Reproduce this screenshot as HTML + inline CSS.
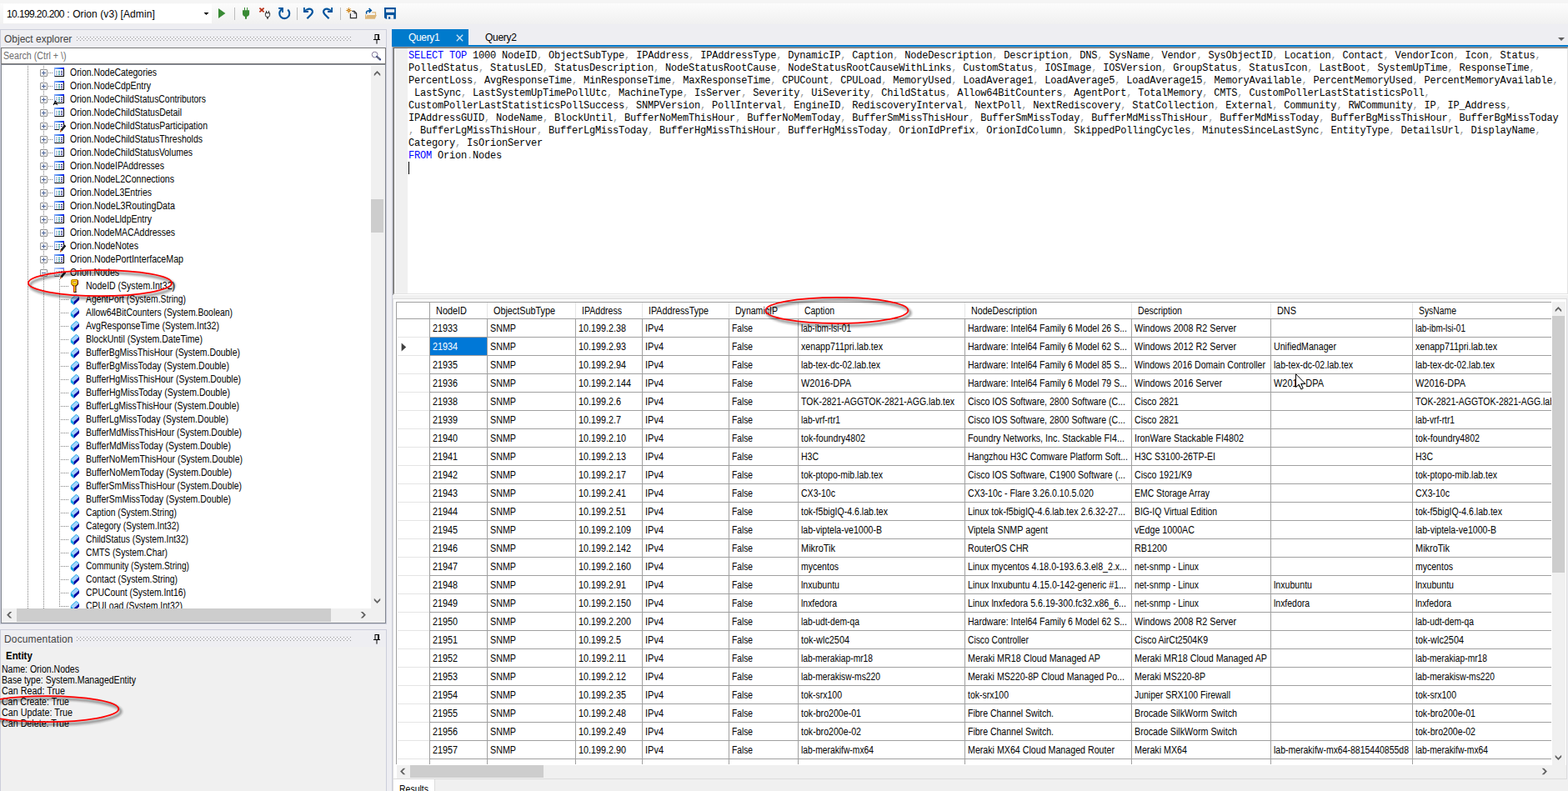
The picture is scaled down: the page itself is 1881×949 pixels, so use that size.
<!DOCTYPE html>
<html lang="en"><head><meta charset="utf-8"><title>SWQL Studio</title>
<style>
html,body{margin:0;padding:0;background:#eeeef2;}
body{width:1881px;height:949px;overflow:hidden;position:relative;font-family:"Liberation Sans",sans-serif;}
#app{position:absolute;left:0;top:0;width:1881px;height:949px;overflow:hidden;background:#eeeef2;}
#app div,#app span,#app svg{position:absolute;box-sizing:border-box;}
.t{white-space:pre;color:#000;font-size:12.3px;line-height:14px;height:14px;transform-origin:0 50%;}
.s{white-space:pre;font-size:12px;line-height:16px;height:16px;}
.code{font-family:"Liberation Mono",monospace;font-size:12px;letter-spacing:-0.2px;line-height:15px;height:15px;white-space:pre;color:#000;left:490px;}
.code b{font-weight:normal;color:#0000ff;}
.code i{font-style:normal;color:#999;}
.vl{width:1px;background:#a0a0a0;}
.hl{height:1px;background:#a0a0a0;}
.dv{width:1px;background-image:linear-gradient(#808080 50%,rgba(0,0,0,0) 50%);background-size:1px 2px;}
.dh{height:1px;background-image:linear-gradient(90deg,#808080 50%,rgba(0,0,0,0) 50%);background-size:2px 1px;}
.pm{width:9px;height:9px;border:1px solid #919191;border-radius:1px;background:linear-gradient(#fff 50%,#e8e8e8);}
.pm:before{content:"";position:absolute;left:1px;top:3px;width:5px;height:1px;background:#4b6397;}
.pm.plus:after{content:"";position:absolute;left:3px;top:1px;width:1px;height:5px;background:#4b6397;}

</style></head><body>
<svg width="0" height="0" style="position:absolute">
<defs>
<linearGradient id="gTbl" x1="0" x2="1" y1="0" y2="0"><stop offset="0" stop-color="#8fb0f8"/><stop offset="0.5" stop-color="#3a7cf0"/><stop offset="1" stop-color="#0010f0"/></linearGradient>
<linearGradient id="gProp" x1="0" x2="1" y1="0" y2="1"><stop offset="0" stop-color="#bfe0ff"/><stop offset="1" stop-color="#5aa0e8"/></linearGradient>
<symbol id="iTbl" viewBox="0 0 16 16">
 <rect x="2" y="4" width="11" height="8" fill="#fff"/>
 <rect x="2" y="2" width="12" height="2" fill="url(#gTbl)"/>
 <rect x="2" y="4" width="1" height="8" fill="#8aa8e0"/>
 <rect x="13" y="4" width="1" height="9" fill="#000"/>
 <rect x="3" y="12" width="11" height="1" fill="#000"/>
 <rect x="2" y="12" width="1" height="1" fill="#506090"/>
 <g fill="#8c9cc0"><rect x="4" y="6" width="2" height="1"/><rect x="4" y="8" width="2" height="1"/><rect x="4" y="10" width="2" height="1"/></g>
 <g fill="#008890"><rect x="7" y="6" width="2" height="1"/><rect x="7" y="8" width="2" height="1"/><rect x="7" y="10" width="2" height="1"/></g>
 <g fill="#000090"><rect x="10" y="6" width="2" height="1"/><rect x="10" y="8" width="2" height="1"/><rect x="10" y="10" width="2" height="1"/></g>
</symbol>
<symbol id="iTblA" viewBox="0 0 16 16">
 <use href="#iTbl"/>
 <path d="M0.4 15.2 L3.4 9.4 L6.4 15.2 Z" fill="#fff"/>
 <path d="M1.1 14.9 L3.4 10.4 L5.7 14.9 M2.1 13.4 H4.7" stroke="#000" stroke-width="1.1" fill="none"/>
</symbol>
<symbol id="iPen" viewBox="0 0 16 16">
 <path d="M7.6 16 L7.6 13.2 L12.4 7.4 L16 7.4 L16 16 Z" fill="#fff"/>
 <path d="M10.4 13.5 L15.3 7.4" stroke="#101010" stroke-width="2.6" fill="none"/>
 <path d="M11.2 12.4 L14.6 8.2" stroke="#3a4a60" stroke-width="0.6" fill="none"/>
 <path d="M9.3 12.6 L11.5 14.4 L8.9 15.6 Z" fill="#e8692a"/>
 <path d="M8.9 15.6 L9.2 14.4 L10.1 15.1 Z" fill="#000"/>
</symbol>
<symbol id="iTblP" viewBox="0 0 16 16">
 <use href="#iTbl"/>
 <use href="#iPen"/>
</symbol>
<symbol id="iTblS" viewBox="0 0 16 16">
 <use href="#iTbl" opacity="0.55"/>
 <use href="#iPen"/>
</symbol>
<symbol id="iProp" viewBox="0 0 16 16">
 <path d="M2.8 7.9 L9.4 1.85 L13 4.9 L6.2 11.1 Z" fill="#a6d2fc"/>
 <path d="M3.2 8.1 L9.4 2.4 L12.6 5.1" fill="none" stroke="#20b0e8" stroke-width="1"/>
 <path d="M13 4.9 L13 8.7 L6.5 15.1 L6.2 11.1 Z" fill="#0000a0"/>
 <path d="M2.8 7.9 L6.2 11.1 L6.5 15.1 L2.8 11.7 Z" fill="#00a2e0"/>
 <path d="M6.2 11.1 L12.4 5.5" fill="none" stroke="#c8f0ff" stroke-width="0.6" stroke-dasharray="1 1"/>
</symbol>
<linearGradient id="gKeyO" x1="0" y1="0" x2="1" y2="1"><stop offset="0" stop-color="#d0a000"/><stop offset="0.45" stop-color="#b07000"/><stop offset="0.6" stop-color="#701000"/><stop offset="1" stop-color="#100000"/></linearGradient>
<symbol id="iKey" viewBox="0 0 16 16">
 <path d="M4.4 0 H10.4 L12 1.6 V6 L9.6 8.6 H5.6 L3 6 V1.4 Z" fill="url(#gKeyO)"/>
 <path d="M5 1 H9.8 L10.8 2 V5.6 L9 7.6 H6.2 L4.2 5.6 V2 Z" fill="#ffd410"/>
 <rect x="5.3" y="2.6" width="4" height="0.9" fill="#901800"/>
 <rect x="6" y="3.4" width="3.2" height="1.1" fill="#fff"/>
 <rect x="5.4" y="4.5" width="4.2" height="0.8" fill="#c09000"/>
 <rect x="6" y="8" width="1.1" height="8" fill="#d42800"/>
 <rect x="7.1" y="7.6" width="1.3" height="8.4" fill="#ffd800"/>
 <rect x="8.4" y="8" width="1" height="8" fill="#100000"/>
 <rect x="8.4" y="10" width="1" height="1" fill="#b04000"/><rect x="8.4" y="12" width="1" height="1" fill="#b04000"/><rect x="8.4" y="14" width="1" height="1" fill="#b04000"/>
 <rect x="7.1" y="15" width="2.3" height="1" fill="#100000"/>
</symbol>
</defs></svg>
<div id="app">
<div style="left:0px;top:0px;width:1881px;height:4px;background:#f5f5f5;"></div>
<div style="left:0px;top:4px;width:1881px;height:25px;background:linear-gradient(#fcfcfc,#f0f0f0);"></div>
<div style="left:4px;top:5px;width:250px;height:23px;background:#fff;"></div>
<span class="s" style="left:8px;top:9px;color:#000;letter-spacing:0.07px;"><span style="position:static;letter-spacing:-0.6px;">10.199.20.200</span> : Orion (v3) [Admin]</span>
<svg style="left:240px;top:4px" width="240" height="25" viewBox="240 4 240 25">
<path d="M244.5 15 H250.5 L247.5 18 Z" fill="#000"/>
<path d="M262 10 L270.4 16 L262 22 Z" fill="#388a34"/>
<rect x="281" y="9" width="1" height="15" fill="#bdbdbd"/>
<rect x="356" y="9" width="1" height="15" fill="#bdbdbd"/>
<rect x="408" y="9" width="1" height="15" fill="#bdbdbd"/>
<g fill="#388a34"><rect x="293" y="9" width="1" height="4"/><rect x="296.1" y="9" width="1" height="4"/>
<path d="M291 12.3 H299.1 V16.6 Q299.1 19.4 296 20 V22.8 H294 V20 Q291 19.4 291 16.6 Z"/></g>
<path d="M311.4 9.6 L316.6 14.4 M316.6 9.6 L311.4 14.4" stroke="#b42a10" stroke-width="1.7" fill="none"/>
<g stroke="#303030" stroke-width="1" fill="none"><path d="M319.5 13 V15.5 M322.5 13 V15.5"/><path d="M318.4 15.5 H323.6 V18.4 Q323.6 20.4 321 20.6 Q318.4 20.4 318.4 18.4 Z" fill="#f0f0f0"/><path d="M321 20.6 V22.8" stroke-width="1.6"/></g>
<path d="M345.2 11.6 A6 6 0 1 1 337 11.9" stroke="#00539c" stroke-width="2.1" fill="none"/>
<path d="M334.1 9.1 H339.9 V14.9 H338.2 V12.2 L336.9 13.4 L335.6 12.1 L336.9 10.8 H334.1 Z" fill="#00539c"/>
<g stroke="#00539c" stroke-width="2.2" fill="none"><path d="M368.4 22.2 L373.4 17.2 Q376.4 14 373.6 11.4 Q371 9.6 368 11.8"/></g>
<path d="M364 9.1 V14.9 H370 V13.1 H367.2 L368.6 11.8 L367.4 10.6 L365.8 12 V9.1 Z" fill="#00539c"/>
<g stroke="#00539c" stroke-width="2.2" fill="none"><path d="M394.6 22.2 L389.6 17.2 Q386.6 14 389.4 11.4 Q392 9.6 395 11.8"/></g>
<path d="M399 9.1 V14.9 H393 V13.1 H395.8 L394.4 11.8 L395.6 10.6 L397.2 12 V9.1 Z" fill="#00539c"/>
<path d="M420.4 14 V21.6 H427.6 V16 L425 13.3 H421" fill="#eeeef2" stroke="#303030" stroke-width="1.2"/>
<path d="M425 13.2 V16 H427.7" fill="none" stroke="#303030" stroke-width="1"/>
<circle cx="418.5" cy="12.5" r="3.9" fill="#fbfbfb"/>
<g stroke="#c87800" stroke-width="0.9" fill="none"><path d="M418.5 9.2 V15.8 M415.2 12.5 H421.8 M416.3 10.3 L420.7 14.7 M420.7 10.3 L416.3 14.7"/></g>
<circle cx="418.5" cy="12.5" r="1.2" fill="#c87800"/><circle cx="418.5" cy="12.5" r="0.6" fill="#fff"/>
<path d="M439.8 16.6 Q438.2 12.8 444.4 12.6" stroke="#00539c" stroke-width="1.6" fill="none"/>
<path d="M442.6 10 L445.3 12.6 L442.6 15.2" stroke="#00539c" stroke-width="1.6" fill="none"/>
<path d="M438.6 22.6 V17.2 M446.2 14.9 H450.5 V18.2" stroke="#dcb67a" stroke-width="1.2" fill="none"/>
<path d="M440.4 18.1 H451.9 L449.8 22.8 H438 Z" fill="#dcb67a"/>
<path d="M461 9.1 H474.9 V22.8 H463 L461 21.2 Z" fill="#00539c"/>
<rect x="463.1" y="11.2" width="10" height="3.6" fill="#f6f6f8"/>
<rect x="464.2" y="12" width="7.8" height="2" fill="#ececf0"/>
<rect x="464.2" y="18.1" width="8" height="4.7" fill="#f4f4f6"/>
<rect x="466" y="20.1" width="2.2" height="2.7" fill="#00539c"/>
</svg>
<div style="left:0px;top:35px;width:464px;height:714px;border:1px solid #ccceDB;background:#eeeef2;"></div>
<span class="s" style="left:5px;top:39px;color:#444;">Object explorer</span>
<div style="left:92px;top:44px;width:329px;height:1px;background-image:linear-gradient(90deg,#999 25%,rgba(0,0,0,0) 25%);background-size:4px 1px;"></div>
<div style="left:94px;top:46px;width:325px;height:1px;background-image:linear-gradient(90deg,#999 25%,rgba(0,0,0,0) 25%);background-size:4px 1px;"></div>
<div style="left:92px;top:48px;width:329px;height:1px;background-image:linear-gradient(90deg,#999 25%,rgba(0,0,0,0) 25%);background-size:4px 1px;"></div>
<svg style="left:448px;top:41px" width="9" height="12" viewBox="0 0 9 12"><rect x="2" y="0.5" width="4.5" height="6" fill="none" stroke="#000" stroke-width="1"/><rect x="5" y="0" width="2" height="7" fill="#000"/><rect x="0" y="6" width="8" height="1" fill="#000"/><rect x="3.5" y="7" width="1" height="4.6" fill="#000"/></svg>
<div style="left:1px;top:57px;width:462px;height:20px;border:1px solid #7a7a7a;background:#fff;"></div>
<span class="t" style="left:4px;top:60px;transform:scaleX(0.8664);color:#6d6d6d;">Search (Ctrl + \)</span>
<svg style="left:445px;top:61px" width="13" height="12" viewBox="0 0 13 12"><circle cx="4.6" cy="4.6" r="3.4" fill="#f4fbff" stroke="#8a7a9a" stroke-width="1"/><path d="M7.2 7 L11 10.4" stroke="#2a3a80" stroke-width="2.2" stroke-linecap="round"/><path d="M7.4 7.2 L10.6 10" stroke="#c8b060" stroke-width="0.8"/></svg>
<div style="left:1px;top:77px;width:462px;height:671px;border:1px solid #828790;background:#fff;"></div>
<div style="left:2px;top:78px;width:443px;height:652px;overflow:hidden;">
<div class="dv" style="left:31px;top:1px;height:660px;"></div>
<div class="dv" style="left:50px;top:1px;height:244px;"></div>
<div class="dv" style="left:50px;top:255px;height:400px;background-position:0 0;"></div>
<div class="dv" style="left:69px;top:257px;height:394px;"></div>
<div class="dh" style="left:56px;top:9px;width:5px;"></div>
<div class="pm plus" style="left:46px;top:5px;"></div>
<svg style="left:61px;top:1px" width="16" height="16"><use href="#iTbl"/></svg>
<span class="t" style="left:81.5px;top:2px;transform:scaleX(0.8499);">Orion.NodeCategories</span>
<div class="dh" style="left:56px;top:25px;width:5px;"></div>
<div class="pm plus" style="left:46px;top:21px;"></div>
<svg style="left:61px;top:17px" width="16" height="16"><use href="#iTbl"/></svg>
<span class="t" style="left:81.5px;top:18px;transform:scaleX(0.8496);">Orion.NodeCdpEntry</span>
<div class="dh" style="left:56px;top:41px;width:5px;"></div>
<div class="pm plus" style="left:46px;top:37px;"></div>
<svg style="left:61px;top:33px" width="16" height="16"><use href="#iTblA"/></svg>
<span class="t" style="left:81.5px;top:34px;transform:scaleX(0.8455);">Orion.NodeChildStatusContributors</span>
<div class="dh" style="left:56px;top:57px;width:5px;"></div>
<div class="pm plus" style="left:46px;top:53px;"></div>
<svg style="left:61px;top:49px" width="16" height="16"><use href="#iTbl"/></svg>
<span class="t" style="left:81.5px;top:50px;transform:scaleX(0.8522);">Orion.NodeChildStatusDetail</span>
<div class="dh" style="left:56px;top:73px;width:5px;"></div>
<div class="pm plus" style="left:46px;top:69px;"></div>
<svg style="left:61px;top:65px" width="16" height="16"><use href="#iTblP"/></svg>
<span class="t" style="left:81.5px;top:66px;transform:scaleX(0.8528);">Orion.NodeChildStatusParticipation</span>
<div class="dh" style="left:56px;top:89px;width:5px;"></div>
<div class="pm plus" style="left:46px;top:85px;"></div>
<svg style="left:61px;top:81px" width="16" height="16"><use href="#iTbl"/></svg>
<span class="t" style="left:81.5px;top:82px;transform:scaleX(0.8519);">Orion.NodeChildStatusThresholds</span>
<div class="dh" style="left:56px;top:105px;width:5px;"></div>
<div class="pm plus" style="left:46px;top:101px;"></div>
<svg style="left:61px;top:97px" width="16" height="16"><use href="#iTbl"/></svg>
<span class="t" style="left:81.5px;top:98px;transform:scaleX(0.8499);">Orion.NodeChildStatusVolumes</span>
<div class="dh" style="left:56px;top:121px;width:5px;"></div>
<div class="pm plus" style="left:46px;top:117px;"></div>
<svg style="left:61px;top:113px" width="16" height="16"><use href="#iTbl"/></svg>
<span class="t" style="left:81.5px;top:114px;transform:scaleX(0.8579);">Orion.NodeIPAddresses</span>
<div class="dh" style="left:56px;top:137px;width:5px;"></div>
<div class="pm plus" style="left:46px;top:133px;"></div>
<svg style="left:61px;top:129px" width="16" height="16"><use href="#iTbl"/></svg>
<span class="t" style="left:81.5px;top:130px;transform:scaleX(0.8624);">Orion.NodeL2Connections</span>
<div class="dh" style="left:56px;top:153px;width:5px;"></div>
<div class="pm plus" style="left:46px;top:149px;"></div>
<svg style="left:61px;top:145px" width="16" height="16"><use href="#iTbl"/></svg>
<span class="t" style="left:81.5px;top:146px;transform:scaleX(0.8532);">Orion.NodeL3Entries</span>
<div class="dh" style="left:56px;top:169px;width:5px;"></div>
<div class="pm plus" style="left:46px;top:165px;"></div>
<svg style="left:61px;top:161px" width="16" height="16"><use href="#iTbl"/></svg>
<span class="t" style="left:81.5px;top:162px;transform:scaleX(0.8693);">Orion.NodeL3RoutingData</span>
<div class="dh" style="left:56px;top:185px;width:5px;"></div>
<div class="pm plus" style="left:46px;top:181px;"></div>
<svg style="left:61px;top:177px" width="16" height="16"><use href="#iTbl"/></svg>
<span class="t" style="left:81.5px;top:178px;transform:scaleX(0.8532);">Orion.NodeLldpEntry</span>
<div class="dh" style="left:56px;top:201px;width:5px;"></div>
<div class="pm plus" style="left:46px;top:197px;"></div>
<svg style="left:61px;top:193px" width="16" height="16"><use href="#iTbl"/></svg>
<span class="t" style="left:81.5px;top:194px;transform:scaleX(0.8494);">Orion.NodeMACAddresses</span>
<div class="dh" style="left:56px;top:217px;width:5px;"></div>
<div class="pm plus" style="left:46px;top:213px;"></div>
<svg style="left:61px;top:209px" width="16" height="16"><use href="#iTblP"/></svg>
<span class="t" style="left:81.5px;top:210px;transform:scaleX(0.8629);">Orion.NodeNotes</span>
<div class="dh" style="left:56px;top:233px;width:5px;"></div>
<div class="pm plus" style="left:46px;top:229px;"></div>
<svg style="left:61px;top:225px" width="16" height="16"><use href="#iTbl"/></svg>
<span class="t" style="left:81.5px;top:226px;transform:scaleX(0.8649);">Orion.NodePortInterfaceMap</span>
<div class="dh" style="left:56px;top:249px;width:5px;"></div>
<div class="pm" style="left:46px;top:245px;"></div>
<svg style="left:61px;top:241px" width="16" height="16"><use href="#iTblS"/></svg>
<span class="t" style="left:81.5px;top:242px;transform:scaleX(0.8545);">Orion.Nodes</span>
<div class="dh" style="left:71px;top:265px;width:10px;"></div>
<svg style="left:80px;top:257px" width="16" height="16"><use href="#iKey"/></svg>
<span class="t" style="left:100.5px;top:258px;transform:scaleX(0.8554);">NodeID (System.Int32)</span>
<div class="dh" style="left:71px;top:281px;width:10px;"></div>
<svg style="left:80px;top:273px" width="16" height="16"><use href="#iProp"/></svg>
<span class="t" style="left:100.5px;top:274px;transform:scaleX(0.8400);">AgentPort (System.String)</span>
<div class="dh" style="left:71px;top:297px;width:10px;"></div>
<svg style="left:80px;top:289px" width="16" height="16"><use href="#iProp"/></svg>
<span class="t" style="left:100.5px;top:290px;transform:scaleX(0.8441);">Allow64BitCounters (System.Boolean)</span>
<div class="dh" style="left:71px;top:313px;width:10px;"></div>
<svg style="left:80px;top:305px" width="16" height="16"><use href="#iProp"/></svg>
<span class="t" style="left:100.5px;top:306px;transform:scaleX(0.8574);">AvgResponseTime (System.Int32)</span>
<div class="dh" style="left:71px;top:329px;width:10px;"></div>
<svg style="left:80px;top:321px" width="16" height="16"><use href="#iProp"/></svg>
<span class="t" style="left:100.5px;top:322px;transform:scaleX(0.8559);">BlockUntil (System.DateTime)</span>
<div class="dh" style="left:71px;top:345px;width:10px;"></div>
<svg style="left:80px;top:337px" width="16" height="16"><use href="#iProp"/></svg>
<span class="t" style="left:100.5px;top:338px;transform:scaleX(0.8493);">BufferBgMissThisHour (System.Double)</span>
<div class="dh" style="left:71px;top:361px;width:10px;"></div>
<svg style="left:80px;top:353px" width="16" height="16"><use href="#iProp"/></svg>
<span class="t" style="left:100.5px;top:354px;transform:scaleX(0.8568);">BufferBgMissToday (System.Double)</span>
<div class="dh" style="left:71px;top:377px;width:10px;"></div>
<svg style="left:80px;top:369px" width="16" height="16"><use href="#iProp"/></svg>
<span class="t" style="left:100.5px;top:370px;transform:scaleX(0.8513);">BufferHgMissThisHour (System.Double)</span>
<div class="dh" style="left:71px;top:393px;width:10px;"></div>
<svg style="left:80px;top:385px" width="16" height="16"><use href="#iProp"/></svg>
<span class="t" style="left:100.5px;top:386px;transform:scaleX(0.8589);">BufferHgMissToday (System.Double)</span>
<div class="dh" style="left:71px;top:409px;width:10px;"></div>
<svg style="left:80px;top:401px" width="16" height="16"><use href="#iProp"/></svg>
<span class="t" style="left:100.5px;top:402px;transform:scaleX(0.8501);">BufferLgMissThisHour (System.Double)</span>
<div class="dh" style="left:71px;top:425px;width:10px;"></div>
<svg style="left:80px;top:417px" width="16" height="16"><use href="#iProp"/></svg>
<span class="t" style="left:100.5px;top:418px;transform:scaleX(0.8577);">BufferLgMissToday (System.Double)</span>
<div class="dh" style="left:71px;top:441px;width:10px;"></div>
<svg style="left:80px;top:433px" width="16" height="16"><use href="#iProp"/></svg>
<span class="t" style="left:100.5px;top:434px;transform:scaleX(0.8505);">BufferMdMissThisHour (System.Double)</span>
<div class="dh" style="left:71px;top:457px;width:10px;"></div>
<svg style="left:80px;top:449px" width="16" height="16"><use href="#iProp"/></svg>
<span class="t" style="left:100.5px;top:450px;transform:scaleX(0.8580);">BufferMdMissToday (System.Double)</span>
<div class="dh" style="left:71px;top:473px;width:10px;"></div>
<svg style="left:80px;top:465px" width="16" height="16"><use href="#iProp"/></svg>
<span class="t" style="left:100.5px;top:466px;transform:scaleX(0.8524);">BufferNoMemThisHour (System.Double)</span>
<div class="dh" style="left:71px;top:489px;width:10px;"></div>
<svg style="left:80px;top:481px" width="16" height="16"><use href="#iProp"/></svg>
<span class="t" style="left:100.5px;top:482px;transform:scaleX(0.8601);">BufferNoMemToday (System.Double)</span>
<div class="dh" style="left:71px;top:505px;width:10px;"></div>
<svg style="left:80px;top:497px" width="16" height="16"><use href="#iProp"/></svg>
<span class="t" style="left:100.5px;top:498px;transform:scaleX(0.8453);">BufferSmMissThisHour (System.Double)</span>
<div class="dh" style="left:71px;top:521px;width:10px;"></div>
<svg style="left:80px;top:513px" width="16" height="16"><use href="#iProp"/></svg>
<span class="t" style="left:100.5px;top:514px;transform:scaleX(0.8523);">BufferSmMissToday (System.Double)</span>
<div class="dh" style="left:71px;top:537px;width:10px;"></div>
<svg style="left:80px;top:529px" width="16" height="16"><use href="#iProp"/></svg>
<span class="t" style="left:100.5px;top:530px;transform:scaleX(0.8349);">Caption (System.String)</span>
<div class="dh" style="left:71px;top:553px;width:10px;"></div>
<svg style="left:80px;top:545px" width="16" height="16"><use href="#iProp"/></svg>
<span class="t" style="left:100.5px;top:546px;transform:scaleX(0.8402);">Category (System.Int32)</span>
<div class="dh" style="left:71px;top:569px;width:10px;"></div>
<svg style="left:80px;top:561px" width="16" height="16"><use href="#iProp"/></svg>
<span class="t" style="left:100.5px;top:562px;transform:scaleX(0.8408);">ChildStatus (System.Int32)</span>
<div class="dh" style="left:71px;top:585px;width:10px;"></div>
<svg style="left:80px;top:577px" width="16" height="16"><use href="#iProp"/></svg>
<span class="t" style="left:100.5px;top:578px;transform:scaleX(0.8338);">CMTS (System.Char)</span>
<div class="dh" style="left:71px;top:601px;width:10px;"></div>
<svg style="left:80px;top:593px" width="16" height="16"><use href="#iProp"/></svg>
<span class="t" style="left:100.5px;top:594px;transform:scaleX(0.8247);">Community (System.String)</span>
<div class="dh" style="left:71px;top:617px;width:10px;"></div>
<svg style="left:80px;top:609px" width="16" height="16"><use href="#iProp"/></svg>
<span class="t" style="left:100.5px;top:610px;transform:scaleX(0.8426);">Contact (System.String)</span>
<div class="dh" style="left:71px;top:633px;width:10px;"></div>
<svg style="left:80px;top:625px" width="16" height="16"><use href="#iProp"/></svg>
<span class="t" style="left:100.5px;top:626px;transform:scaleX(0.8440);">CPUCount (System.Int16)</span>
<div class="dh" style="left:71px;top:649px;width:10px;"></div>
<svg style="left:80px;top:641px" width="16" height="16"><use href="#iProp"/></svg>
<span class="t" style="left:100.5px;top:642px;transform:scaleX(0.8485);">CPULoad (System.Int32)</span>
</div>
<div style="left:445px;top:79px;width:17px;height:651px;background:#f0f0f0;"></div>
<svg style="left:446px;top:82px" width="12" height="12" viewBox="-6.5 -6.2 12 12"><polygon points="0,-3.1 3.7,0.6 3.7,3.1 0,-0.6 -3.7,3.1 -3.7,0.6" fill="#606060"/></svg>
<div style="left:445px;top:239px;width:15px;height:40px;background:#cdcdcd;"></div>
<svg style="left:446px;top:714px" width="12" height="12" viewBox="-6.5 -6.8 12 12"><polygon points="0,3.1 3.7,-0.6 3.7,-3.1 0,0.6 -3.7,-3.1 -3.7,-0.6" fill="#606060"/></svg>
<div style="left:2px;top:730px;width:460px;height:17px;background:#f0f0f0;"></div>
<svg style="left:5px;top:731px" width="12" height="12" viewBox="-6.2 -6.7 12 12"><polygon points="-3.1,0 0.6,3.7 3.1,3.7 -0.6,0 3.1,-3.7 0.6,-3.7" fill="#606060"/></svg>
<div style="left:20px;top:730px;width:377px;height:16px;background:#cdcdcd;"></div>
<svg style="left:429px;top:731px" width="12" height="12" viewBox="-6.8 -6.7 12 12"><polygon points="3.1,0 -0.6,3.7 -3.1,3.7 0.6,0 -3.1,-3.7 -0.6,-3.7" fill="#606060"/></svg>
<div style="left:0px;top:755px;width:464px;height:200px;border:1px solid #ccceDB;background:#f0f0f0;"></div>
<div style="left:1px;top:756px;width:462px;height:20px;background:#eeeef2;"></div>
<span class="s" style="left:5px;top:759px;color:#444;letter-spacing:0.15px;">Documentation</span>
<div style="left:92px;top:764px;width:329px;height:1px;background-image:linear-gradient(90deg,#999 25%,rgba(0,0,0,0) 25%);background-size:4px 1px;"></div>
<div style="left:94px;top:766px;width:325px;height:1px;background-image:linear-gradient(90deg,#999 25%,rgba(0,0,0,0) 25%);background-size:4px 1px;"></div>
<div style="left:92px;top:768px;width:329px;height:1px;background-image:linear-gradient(90deg,#999 25%,rgba(0,0,0,0) 25%);background-size:4px 1px;"></div>
<svg style="left:448px;top:761px" width="9" height="12" viewBox="0 0 9 12"><rect x="2" y="0.5" width="4.5" height="6" fill="none" stroke="#000" stroke-width="1"/><rect x="5" y="0" width="2" height="7" fill="#000"/><rect x="0" y="6" width="8" height="1" fill="#000"/><rect x="3.5" y="7" width="1" height="4.6" fill="#000"/></svg>
<span class="t" style="left:7px;top:780px;transform:scaleX(0.9300);font-weight:bold;">Entity</span>
<span class="t" style="left:2px;top:796px;transform:scaleX(0.8557);">Name: Orion.Nodes</span>
<span class="t" style="left:2px;top:809px;transform:scaleX(0.8563);">Base type: System.ManagedEntity</span>
<span class="t" style="left:2px;top:822px;transform:scaleX(0.8753);">Can Read: True</span>
<span class="t" style="left:2px;top:835px;transform:scaleX(0.8586);">Can Create: True</span>
<span class="t" style="left:2px;top:848px;transform:scaleX(0.8755);">Can Update: True</span>
<span class="t" style="left:2px;top:861px;transform:scaleX(0.8712);">Can Delete: True</span>
<div style="left:470px;top:35px;width:92px;height:21px;background:#007acc;"></div>
<div style="left:470px;top:54px;width:1411px;height:2px;background:#007acc;"></div>
<span class="s" style="left:490px;top:37px;color:#fff;letter-spacing:-0.35px;">Query1</span>
<svg style="left:547px;top:41px" width="9" height="9" viewBox="0 0 9 9"><path d="M0.8 0.8 L8.2 8.2 M8.2 0.8 L0.8 8.2" stroke="#d0e6f5" stroke-width="1.3" fill="none"/></svg>
<span class="s" style="left:582px;top:37px;color:#000;letter-spacing:-0.3px;">Query2</span>
<svg style="left:1869px;top:45px" width="8" height="5" viewBox="0 0 8 5"><path d="M0 0 H8 L4 4 Z" fill="#606060"/></svg>
<div style="left:470px;top:56px;width:1px;height:900px;background:#ccceDB;"></div>
<div style="left:471px;top:56px;width:1410px;height:298px;background:#fff;border-left:1px solid #a0a0a0;border-top:1px solid #a0a0a0;"></div>
<div style="left:472px;top:57px;width:1409px;height:296px;background:#fff;border-left:1px solid #696969;border-top:1px solid #696969;border-right:1px solid #e3e3e3;border-bottom:1px solid #e3e3e3;"></div>
<div style="left:474px;top:58px;width:15px;height:294px;background:#f0f0f0;"></div>
<span class="code" style="top:60px;"><b>SELECT</b> <b>TOP</b> 1000 NodeID<i>,</i> ObjectSubType<i>,</i> IPAddress<i>,</i> IPAddressType<i>,</i> DynamicIP<i>,</i> Caption<i>,</i> NodeDescription<i>,</i> Description<i>,</i> DNS<i>,</i> SysName<i>,</i> Vendor<i>,</i> SysObjectID<i>,</i> Location<i>,</i> Contact<i>,</i> VendorIcon<i>,</i> Icon<i>,</i> Status<i>,</i></span>
<span class="code" style="top:75px;">PolledStatus<i>,</i> StatusLED<i>,</i> StatusDescription<i>,</i> NodeStatusRootCause<i>,</i> NodeStatusRootCauseWithLinks<i>,</i> CustomStatus<i>,</i> IOSImage<i>,</i> IOSVersion<i>,</i> GroupStatus<i>,</i> StatusIcon<i>,</i> LastBoot<i>,</i> SystemUpTime<i>,</i> ResponseTime<i>,</i></span>
<span class="code" style="top:90px;">PercentLoss<i>,</i> AvgResponseTime<i>,</i> MinResponseTime<i>,</i> MaxResponseTime<i>,</i> CPUCount<i>,</i> CPULoad<i>,</i> MemoryUsed<i>,</i> LoadAverage1<i>,</i> LoadAverage5<i>,</i> LoadAverage15<i>,</i> MemoryAvailable<i>,</i> PercentMemoryUsed<i>,</i> PercentMemoryAvailable<i>,</i></span>
<span class="code" style="top:105px;"> LastSync<i>,</i> LastSystemUpTimePollUtc<i>,</i> MachineType<i>,</i> IsServer<i>,</i> Severity<i>,</i> UiSeverity<i>,</i> ChildStatus<i>,</i> Allow64BitCounters<i>,</i> AgentPort<i>,</i> TotalMemory<i>,</i> CMTS<i>,</i> CustomPollerLastStatisticsPoll<i>,</i></span>
<span class="code" style="top:120px;">CustomPollerLastStatisticsPollSuccess<i>,</i> SNMPVersion<i>,</i> PollInterval<i>,</i> EngineID<i>,</i> RediscoveryInterval<i>,</i> NextPoll<i>,</i> NextRediscovery<i>,</i> StatCollection<i>,</i> External<i>,</i> Community<i>,</i> RWCommunity<i>,</i> IP<i>,</i> IP_Address<i>,</i></span>
<span class="code" style="top:135px;">IPAddressGUID<i>,</i> NodeName<i>,</i> BlockUntil<i>,</i> BufferNoMemThisHour<i>,</i> BufferNoMemToday<i>,</i> BufferSmMissThisHour<i>,</i> BufferSmMissToday<i>,</i> BufferMdMissThisHour<i>,</i> BufferMdMissToday<i>,</i> BufferBgMissThisHour<i>,</i> BufferBgMissToday</span>
<span class="code" style="top:150px;"><i>,</i> BufferLgMissThisHour<i>,</i> BufferLgMissToday<i>,</i> BufferHgMissThisHour<i>,</i> BufferHgMissToday<i>,</i> OrionIdPrefix<i>,</i> OrionIdColumn<i>,</i> SkippedPollingCycles<i>,</i> MinutesSinceLastSync<i>,</i> EntityType<i>,</i> DetailsUrl<i>,</i> DisplayName<i>,</i></span>
<span class="code" style="top:165px;">Category<i>,</i> IsOrionServer</span>
<span class="code" style="top:180px;"><b>FROM</b> Orion<i>.</i>Nodes</span>
<div style="left:490px;top:194px;width:1px;height:15px;background:#000;"></div>
<div style="left:471px;top:354px;width:1410px;height:4px;background:#f0f0f0;"></div>
<div style="left:471px;top:358px;width:1409px;height:577px;background:#fff;border:1px solid #dcdcdc;"></div>
<div style="left:471px;top:935px;width:1410px;height:14px;background:#f0f0f0;"></div>
<div style="left:471px;top:935px;width:51px;height:14px;background:#fff;border-right:1px solid #dcdcdc;border-left:1px solid #dcdcdc;"></div>
<span class="t" style="left:479px;top:940px;transform:scaleX(0.8534);">Results</span>
<div style="left:475px;top:362px;width:1386px;height:555px;overflow:hidden;background:#fff;">
<div class="hl" style="left:0;top:0;width:1386px;"></div>
<div class="vl" style="left:0;top:0;height:555px;"></div>
<div class="hl" style="left:0;top:20px;width:1386px;"></div>
<div class="vl" style="left:40px;top:0;height:555px;"></div>
<div class="vl" style="left:109px;top:1px;height:19px;background:#e5e5e5;"></div>
<div class="vl" style="left:109px;top:21px;height:534px;"></div>
<div class="vl" style="left:215px;top:1px;height:19px;background:#e5e5e5;"></div>
<div class="vl" style="left:215px;top:21px;height:534px;"></div>
<div class="vl" style="left:295px;top:1px;height:19px;background:#e5e5e5;"></div>
<div class="vl" style="left:295px;top:21px;height:534px;"></div>
<div class="vl" style="left:399px;top:1px;height:19px;background:#e5e5e5;"></div>
<div class="vl" style="left:399px;top:21px;height:534px;"></div>
<div class="vl" style="left:482px;top:1px;height:19px;background:#e5e5e5;"></div>
<div class="vl" style="left:482px;top:21px;height:534px;"></div>
<div class="vl" style="left:682px;top:1px;height:19px;background:#e5e5e5;"></div>
<div class="vl" style="left:682px;top:21px;height:534px;"></div>
<div class="vl" style="left:882px;top:1px;height:19px;background:#e5e5e5;"></div>
<div class="vl" style="left:882px;top:21px;height:534px;"></div>
<div class="vl" style="left:1049px;top:1px;height:19px;background:#e5e5e5;"></div>
<div class="vl" style="left:1049px;top:21px;height:534px;"></div>
<div class="vl" style="left:1219px;top:1px;height:19px;background:#e5e5e5;"></div>
<div class="vl" style="left:1219px;top:21px;height:534px;"></div>
<div class="hl" style="left:41px;top:42px;width:1345px;"></div>
<div class="hl" style="left:2px;top:42px;width:38px;background:#e5e5e5;"></div>
<div class="hl" style="left:41px;top:64px;width:1345px;"></div>
<div class="hl" style="left:2px;top:64px;width:38px;background:#e5e5e5;"></div>
<div class="hl" style="left:41px;top:86px;width:1345px;"></div>
<div class="hl" style="left:2px;top:86px;width:38px;background:#e5e5e5;"></div>
<div class="hl" style="left:41px;top:108px;width:1345px;"></div>
<div class="hl" style="left:2px;top:108px;width:38px;background:#e5e5e5;"></div>
<div class="hl" style="left:41px;top:130px;width:1345px;"></div>
<div class="hl" style="left:2px;top:130px;width:38px;background:#e5e5e5;"></div>
<div class="hl" style="left:41px;top:152px;width:1345px;"></div>
<div class="hl" style="left:2px;top:152px;width:38px;background:#e5e5e5;"></div>
<div class="hl" style="left:41px;top:174px;width:1345px;"></div>
<div class="hl" style="left:2px;top:174px;width:38px;background:#e5e5e5;"></div>
<div class="hl" style="left:41px;top:196px;width:1345px;"></div>
<div class="hl" style="left:2px;top:196px;width:38px;background:#e5e5e5;"></div>
<div class="hl" style="left:41px;top:218px;width:1345px;"></div>
<div class="hl" style="left:2px;top:218px;width:38px;background:#e5e5e5;"></div>
<div class="hl" style="left:41px;top:240px;width:1345px;"></div>
<div class="hl" style="left:2px;top:240px;width:38px;background:#e5e5e5;"></div>
<div class="hl" style="left:41px;top:262px;width:1345px;"></div>
<div class="hl" style="left:2px;top:262px;width:38px;background:#e5e5e5;"></div>
<div class="hl" style="left:41px;top:284px;width:1345px;"></div>
<div class="hl" style="left:2px;top:284px;width:38px;background:#e5e5e5;"></div>
<div class="hl" style="left:41px;top:306px;width:1345px;"></div>
<div class="hl" style="left:2px;top:306px;width:38px;background:#e5e5e5;"></div>
<div class="hl" style="left:41px;top:328px;width:1345px;"></div>
<div class="hl" style="left:2px;top:328px;width:38px;background:#e5e5e5;"></div>
<div class="hl" style="left:41px;top:350px;width:1345px;"></div>
<div class="hl" style="left:2px;top:350px;width:38px;background:#e5e5e5;"></div>
<div class="hl" style="left:41px;top:372px;width:1345px;"></div>
<div class="hl" style="left:2px;top:372px;width:38px;background:#e5e5e5;"></div>
<div class="hl" style="left:41px;top:394px;width:1345px;"></div>
<div class="hl" style="left:2px;top:394px;width:38px;background:#e5e5e5;"></div>
<div class="hl" style="left:41px;top:416px;width:1345px;"></div>
<div class="hl" style="left:2px;top:416px;width:38px;background:#e5e5e5;"></div>
<div class="hl" style="left:41px;top:438px;width:1345px;"></div>
<div class="hl" style="left:2px;top:438px;width:38px;background:#e5e5e5;"></div>
<div class="hl" style="left:41px;top:460px;width:1345px;"></div>
<div class="hl" style="left:2px;top:460px;width:38px;background:#e5e5e5;"></div>
<div class="hl" style="left:41px;top:482px;width:1345px;"></div>
<div class="hl" style="left:2px;top:482px;width:38px;background:#e5e5e5;"></div>
<div class="hl" style="left:41px;top:504px;width:1345px;"></div>
<div class="hl" style="left:2px;top:504px;width:38px;background:#e5e5e5;"></div>
<div class="hl" style="left:41px;top:526px;width:1345px;"></div>
<div class="hl" style="left:2px;top:526px;width:38px;background:#e5e5e5;"></div>
<div class="hl" style="left:41px;top:548px;width:1345px;"></div>
<div class="hl" style="left:2px;top:548px;width:38px;background:#e5e5e5;"></div>
<span class="t" style="left:48px;top:4px;transform:scaleX(0.8872);">NodeID</span>
<span class="t" style="left:117px;top:4px;transform:scaleX(0.8799);">ObjectSubType</span>
<span class="t" style="left:223px;top:4px;transform:scaleX(0.8597);">IPAddress</span>
<span class="t" style="left:303px;top:4px;transform:scaleX(0.8728);">IPAddressType</span>
<span class="t" style="left:407px;top:4px;transform:scaleX(0.8577);">DynamicIP</span>
<span class="t" style="left:490px;top:4px;transform:scaleX(0.8492);">Caption</span>
<span class="t" style="left:690px;top:4px;transform:scaleX(0.8689);">NodeDescription</span>
<span class="t" style="left:890px;top:4px;transform:scaleX(0.8615);">Description</span>
<span class="t" style="left:1057px;top:4px;transform:scaleX(0.8856);">DNS</span>
<span class="t" style="left:1227px;top:4px;transform:scaleX(0.8441);">SysName</span>
<span class="t" style="left:43.5px;top:25px;transform:scaleX(0.8772);">21933</span>
<span class="t" style="left:112.5px;top:25px;transform:scaleX(0.8723);">SNMP</span>
<span class="t" style="left:218.5px;top:25px;transform:scaleX(0.8773);">10.199.2.38</span>
<span class="t" style="left:298.5px;top:25px;transform:scaleX(0.8939);">IPv4</span>
<span class="t" style="left:402.5px;top:25px;transform:scaleX(0.8312);">False</span>
<span class="t" style="left:485.5px;top:25px;transform:scaleX(0.8129);">lab-ibm-lsi-01</span>
<span class="t" style="left:685.5px;top:25px;transform:scaleX(0.8571);">Hardware: Intel64 Family 6 Model 26 S...</span>
<span class="t" style="left:885.5px;top:25px;transform:scaleX(0.8748);">Windows 2008 R2 Server</span>
<span class="t" style="left:1222.5px;top:25px;transform:scaleX(0.8129);">lab-ibm-lsi-01</span>
<div style="left:41px;top:43px;width:68px;height:21px;background:#0078d7;"></div>
<span class="t" style="left:43.5px;top:47px;transform:scaleX(0.8772);color:#fff;">21934</span>
<span class="t" style="left:112.5px;top:47px;transform:scaleX(0.8723);">SNMP</span>
<span class="t" style="left:218.5px;top:47px;transform:scaleX(0.8773);">10.199.2.93</span>
<span class="t" style="left:298.5px;top:47px;transform:scaleX(0.8939);">IPv4</span>
<span class="t" style="left:402.5px;top:47px;transform:scaleX(0.8312);">False</span>
<span class="t" style="left:485.5px;top:47px;transform:scaleX(0.8651);">xenapp711pri.lab.tex</span>
<span class="t" style="left:685.5px;top:47px;transform:scaleX(0.8571);">Hardware: Intel64 Family 6 Model 62 S...</span>
<span class="t" style="left:885.5px;top:47px;transform:scaleX(0.8748);">Windows 2012 R2 Server</span>
<span class="t" style="left:1052.5px;top:47px;transform:scaleX(0.8638);">UnifiedManager</span>
<span class="t" style="left:1222.5px;top:47px;transform:scaleX(0.8651);">xenapp711pri.lab.tex</span>
<span class="t" style="left:43.5px;top:69px;transform:scaleX(0.8772);">21935</span>
<span class="t" style="left:112.5px;top:69px;transform:scaleX(0.8723);">SNMP</span>
<span class="t" style="left:218.5px;top:69px;transform:scaleX(0.8773);">10.199.2.94</span>
<span class="t" style="left:298.5px;top:69px;transform:scaleX(0.8939);">IPv4</span>
<span class="t" style="left:402.5px;top:69px;transform:scaleX(0.8312);">False</span>
<span class="t" style="left:485.5px;top:69px;transform:scaleX(0.8525);">lab-tex-dc-02.lab.tex</span>
<span class="t" style="left:685.5px;top:69px;transform:scaleX(0.8571);">Hardware: Intel64 Family 6 Model 85 S...</span>
<span class="t" style="left:885.5px;top:69px;transform:scaleX(0.8570);">Windows 2016 Domain Controller</span>
<span class="t" style="left:1052.5px;top:69px;transform:scaleX(0.8525);">lab-tex-dc-02.lab.tex</span>
<span class="t" style="left:1222.5px;top:69px;transform:scaleX(0.8525);">lab-tex-dc-02.lab.tex</span>
<span class="t" style="left:43.5px;top:91px;transform:scaleX(0.8772);">21936</span>
<span class="t" style="left:112.5px;top:91px;transform:scaleX(0.8723);">SNMP</span>
<span class="t" style="left:218.5px;top:91px;transform:scaleX(0.8773);">10.199.2.144</span>
<span class="t" style="left:298.5px;top:91px;transform:scaleX(0.8939);">IPv4</span>
<span class="t" style="left:402.5px;top:91px;transform:scaleX(0.8312);">False</span>
<span class="t" style="left:485.5px;top:91px;transform:scaleX(0.8896);">W2016-DPA</span>
<span class="t" style="left:685.5px;top:91px;transform:scaleX(0.8571);">Hardware: Intel64 Family 6 Model 79 S...</span>
<span class="t" style="left:885.5px;top:91px;transform:scaleX(0.8727);">Windows 2016 Server</span>
<span class="t" style="left:1052.5px;top:91px;transform:scaleX(0.8896);">W2016-DPA</span>
<span class="t" style="left:1222.5px;top:91px;transform:scaleX(0.8896);">W2016-DPA</span>
<span class="t" style="left:43.5px;top:113px;transform:scaleX(0.8772);">21938</span>
<span class="t" style="left:112.5px;top:113px;transform:scaleX(0.8723);">SNMP</span>
<span class="t" style="left:218.5px;top:113px;transform:scaleX(0.8773);">10.199.2.6</span>
<span class="t" style="left:298.5px;top:113px;transform:scaleX(0.8939);">IPv4</span>
<span class="t" style="left:402.5px;top:113px;transform:scaleX(0.8312);">False</span>
<span class="t" style="left:485.5px;top:113px;transform:scaleX(0.8536);">TOK-2821-AGGTOK-2821-AGG.lab.tex</span>
<span class="t" style="left:685.5px;top:113px;transform:scaleX(0.8586);">Cisco IOS Software, 2800 Software (C...</span>
<span class="t" style="left:885.5px;top:113px;transform:scaleX(0.8613);">Cisco 2821</span>
<span class="t" style="left:1222.5px;top:113px;transform:scaleX(0.8536);">TOK-2821-AGGTOK-2821-AGG.lab.tex</span>
<span class="t" style="left:43.5px;top:135px;transform:scaleX(0.8772);">21939</span>
<span class="t" style="left:112.5px;top:135px;transform:scaleX(0.8723);">SNMP</span>
<span class="t" style="left:218.5px;top:135px;transform:scaleX(0.8773);">10.199.2.7</span>
<span class="t" style="left:298.5px;top:135px;transform:scaleX(0.8939);">IPv4</span>
<span class="t" style="left:402.5px;top:135px;transform:scaleX(0.8312);">False</span>
<span class="t" style="left:485.5px;top:135px;transform:scaleX(0.8287);">lab-vrf-rtr1</span>
<span class="t" style="left:685.5px;top:135px;transform:scaleX(0.8586);">Cisco IOS Software, 2800 Software (C...</span>
<span class="t" style="left:885.5px;top:135px;transform:scaleX(0.8613);">Cisco 2821</span>
<span class="t" style="left:1222.5px;top:135px;transform:scaleX(0.8287);">lab-vrf-rtr1</span>
<span class="t" style="left:43.5px;top:157px;transform:scaleX(0.8772);">21940</span>
<span class="t" style="left:112.5px;top:157px;transform:scaleX(0.8723);">SNMP</span>
<span class="t" style="left:218.5px;top:157px;transform:scaleX(0.8773);">10.199.2.10</span>
<span class="t" style="left:298.5px;top:157px;transform:scaleX(0.8939);">IPv4</span>
<span class="t" style="left:402.5px;top:157px;transform:scaleX(0.8312);">False</span>
<span class="t" style="left:485.5px;top:157px;transform:scaleX(0.8663);">tok-foundry4802</span>
<span class="t" style="left:685.5px;top:157px;transform:scaleX(0.8731);">Foundry Networks, Inc. Stackable FI4...</span>
<span class="t" style="left:885.5px;top:157px;transform:scaleX(0.8776);">IronWare Stackable FI4802</span>
<span class="t" style="left:1222.5px;top:157px;transform:scaleX(0.8663);">tok-foundry4802</span>
<span class="t" style="left:43.5px;top:179px;transform:scaleX(0.8772);">21941</span>
<span class="t" style="left:112.5px;top:179px;transform:scaleX(0.8723);">SNMP</span>
<span class="t" style="left:218.5px;top:179px;transform:scaleX(0.8773);">10.199.2.13</span>
<span class="t" style="left:298.5px;top:179px;transform:scaleX(0.8939);">IPv4</span>
<span class="t" style="left:402.5px;top:179px;transform:scaleX(0.8312);">False</span>
<span class="t" style="left:485.5px;top:179px;transform:scaleX(0.8535);">H3C</span>
<span class="t" style="left:685.5px;top:179px;transform:scaleX(0.8537);">Hangzhou H3C Comware Platform Soft...</span>
<span class="t" style="left:885.5px;top:179px;transform:scaleX(0.8599);">H3C S3100-26TP-EI</span>
<span class="t" style="left:1222.5px;top:179px;transform:scaleX(0.8535);">H3C</span>
<span class="t" style="left:43.5px;top:201px;transform:scaleX(0.8772);">21942</span>
<span class="t" style="left:112.5px;top:201px;transform:scaleX(0.8723);">SNMP</span>
<span class="t" style="left:218.5px;top:201px;transform:scaleX(0.8773);">10.199.2.17</span>
<span class="t" style="left:298.5px;top:201px;transform:scaleX(0.8939);">IPv4</span>
<span class="t" style="left:402.5px;top:201px;transform:scaleX(0.8312);">False</span>
<span class="t" style="left:485.5px;top:201px;transform:scaleX(0.8533);">tok-ptopo-mib.lab.tex</span>
<span class="t" style="left:685.5px;top:201px;transform:scaleX(0.8586);">Cisco IOS Software, C1900 Software (...</span>
<span class="t" style="left:885.5px;top:201px;transform:scaleX(0.8625);">Cisco 1921/K9</span>
<span class="t" style="left:1222.5px;top:201px;transform:scaleX(0.8533);">tok-ptopo-mib.lab.tex</span>
<span class="t" style="left:43.5px;top:223px;transform:scaleX(0.8772);">21943</span>
<span class="t" style="left:112.5px;top:223px;transform:scaleX(0.8723);">SNMP</span>
<span class="t" style="left:218.5px;top:223px;transform:scaleX(0.8773);">10.199.2.41</span>
<span class="t" style="left:298.5px;top:223px;transform:scaleX(0.8939);">IPv4</span>
<span class="t" style="left:402.5px;top:223px;transform:scaleX(0.8312);">False</span>
<span class="t" style="left:485.5px;top:223px;transform:scaleX(0.8568);">CX3-10c</span>
<span class="t" style="left:685.5px;top:223px;transform:scaleX(0.8594);">CX3-10c - Flare 3.26.0.10.5.020</span>
<span class="t" style="left:885.5px;top:223px;transform:scaleX(0.8494);">EMC Storage Array</span>
<span class="t" style="left:1222.5px;top:223px;transform:scaleX(0.8568);">CX3-10c</span>
<span class="t" style="left:43.5px;top:245px;transform:scaleX(0.8772);">21944</span>
<span class="t" style="left:112.5px;top:245px;transform:scaleX(0.8723);">SNMP</span>
<span class="t" style="left:218.5px;top:245px;transform:scaleX(0.8773);">10.199.2.51</span>
<span class="t" style="left:298.5px;top:245px;transform:scaleX(0.8939);">IPv4</span>
<span class="t" style="left:402.5px;top:245px;transform:scaleX(0.8312);">False</span>
<span class="t" style="left:485.5px;top:245px;transform:scaleX(0.8595);">tok-f5bigIQ-4.6.lab.tex</span>
<span class="t" style="left:685.5px;top:245px;transform:scaleX(0.8612);">Linux tok-f5bigIQ-4.6.lab.tex 2.6.32-27...</span>
<span class="t" style="left:885.5px;top:245px;transform:scaleX(0.8436);">BIG-IQ Virtual Edition</span>
<span class="t" style="left:1222.5px;top:245px;transform:scaleX(0.8595);">tok-f5bigIQ-4.6.lab.tex</span>
<span class="t" style="left:43.5px;top:267px;transform:scaleX(0.8772);">21945</span>
<span class="t" style="left:112.5px;top:267px;transform:scaleX(0.8723);">SNMP</span>
<span class="t" style="left:218.5px;top:267px;transform:scaleX(0.8773);">10.199.2.109</span>
<span class="t" style="left:298.5px;top:267px;transform:scaleX(0.8939);">IPv4</span>
<span class="t" style="left:402.5px;top:267px;transform:scaleX(0.8312);">False</span>
<span class="t" style="left:485.5px;top:267px;transform:scaleX(0.8599);">lab-viptela-ve1000-B</span>
<span class="t" style="left:685.5px;top:267px;transform:scaleX(0.8702);">Viptela SNMP agent</span>
<span class="t" style="left:885.5px;top:267px;transform:scaleX(0.8702);">vEdge 1000AC</span>
<span class="t" style="left:1222.5px;top:267px;transform:scaleX(0.8599);">lab-viptela-ve1000-B</span>
<span class="t" style="left:43.5px;top:289px;transform:scaleX(0.8772);">21946</span>
<span class="t" style="left:112.5px;top:289px;transform:scaleX(0.8723);">SNMP</span>
<span class="t" style="left:218.5px;top:289px;transform:scaleX(0.8773);">10.199.2.142</span>
<span class="t" style="left:298.5px;top:289px;transform:scaleX(0.8939);">IPv4</span>
<span class="t" style="left:402.5px;top:289px;transform:scaleX(0.8312);">False</span>
<span class="t" style="left:485.5px;top:289px;transform:scaleX(0.8913);">MikroTik</span>
<span class="t" style="left:685.5px;top:289px;transform:scaleX(0.8613);">RouterOS CHR</span>
<span class="t" style="left:885.5px;top:289px;transform:scaleX(0.8774);">RB1200</span>
<span class="t" style="left:1222.5px;top:289px;transform:scaleX(0.8913);">MikroTik</span>
<span class="t" style="left:43.5px;top:311px;transform:scaleX(0.8772);">21947</span>
<span class="t" style="left:112.5px;top:311px;transform:scaleX(0.8723);">SNMP</span>
<span class="t" style="left:218.5px;top:311px;transform:scaleX(0.8773);">10.199.2.160</span>
<span class="t" style="left:298.5px;top:311px;transform:scaleX(0.8939);">IPv4</span>
<span class="t" style="left:402.5px;top:311px;transform:scaleX(0.8312);">False</span>
<span class="t" style="left:485.5px;top:311px;transform:scaleX(0.8550);">mycentos</span>
<span class="t" style="left:685.5px;top:311px;transform:scaleX(0.8622);">Linux mycentos 4.18.0-193.6.3.el8_2.x...</span>
<span class="t" style="left:885.5px;top:311px;transform:scaleX(0.8406);">net-snmp - Linux</span>
<span class="t" style="left:1222.5px;top:311px;transform:scaleX(0.8550);">mycentos</span>
<span class="t" style="left:43.5px;top:333px;transform:scaleX(0.8772);">21948</span>
<span class="t" style="left:112.5px;top:333px;transform:scaleX(0.8723);">SNMP</span>
<span class="t" style="left:218.5px;top:333px;transform:scaleX(0.8773);">10.199.2.91</span>
<span class="t" style="left:298.5px;top:333px;transform:scaleX(0.8939);">IPv4</span>
<span class="t" style="left:402.5px;top:333px;transform:scaleX(0.8312);">False</span>
<span class="t" style="left:485.5px;top:333px;transform:scaleX(0.8624);">lnxubuntu</span>
<span class="t" style="left:685.5px;top:333px;transform:scaleX(0.8630);">Linux lnxubuntu 4.15.0-142-generic #1...</span>
<span class="t" style="left:885.5px;top:333px;transform:scaleX(0.8406);">net-snmp - Linux</span>
<span class="t" style="left:1052.5px;top:333px;transform:scaleX(0.8624);">lnxubuntu</span>
<span class="t" style="left:1222.5px;top:333px;transform:scaleX(0.8624);">lnxubuntu</span>
<span class="t" style="left:43.5px;top:355px;transform:scaleX(0.8772);">21949</span>
<span class="t" style="left:112.5px;top:355px;transform:scaleX(0.8723);">SNMP</span>
<span class="t" style="left:218.5px;top:355px;transform:scaleX(0.8773);">10.199.2.150</span>
<span class="t" style="left:298.5px;top:355px;transform:scaleX(0.8939);">IPv4</span>
<span class="t" style="left:402.5px;top:355px;transform:scaleX(0.8312);">False</span>
<span class="t" style="left:485.5px;top:355px;transform:scaleX(0.8499);">lnxfedora</span>
<span class="t" style="left:685.5px;top:355px;transform:scaleX(0.8656);">Linux lnxfedora 5.6.19-300.fc32.x86_6...</span>
<span class="t" style="left:885.5px;top:355px;transform:scaleX(0.8406);">net-snmp - Linux</span>
<span class="t" style="left:1052.5px;top:355px;transform:scaleX(0.8499);">lnxfedora</span>
<span class="t" style="left:1222.5px;top:355px;transform:scaleX(0.8499);">lnxfedora</span>
<span class="t" style="left:43.5px;top:377px;transform:scaleX(0.8772);">21950</span>
<span class="t" style="left:112.5px;top:377px;transform:scaleX(0.8723);">SNMP</span>
<span class="t" style="left:218.5px;top:377px;transform:scaleX(0.8773);">10.199.2.200</span>
<span class="t" style="left:298.5px;top:377px;transform:scaleX(0.8939);">IPv4</span>
<span class="t" style="left:402.5px;top:377px;transform:scaleX(0.8312);">False</span>
<span class="t" style="left:485.5px;top:377px;transform:scaleX(0.8393);">lab-udt-dem-qa</span>
<span class="t" style="left:685.5px;top:377px;transform:scaleX(0.8571);">Hardware: Intel64 Family 6 Model 62 S...</span>
<span class="t" style="left:885.5px;top:377px;transform:scaleX(0.8748);">Windows 2008 R2 Server</span>
<span class="t" style="left:1222.5px;top:377px;transform:scaleX(0.8393);">lab-udt-dem-qa</span>
<span class="t" style="left:43.5px;top:399px;transform:scaleX(0.8772);">21951</span>
<span class="t" style="left:112.5px;top:399px;transform:scaleX(0.8723);">SNMP</span>
<span class="t" style="left:218.5px;top:399px;transform:scaleX(0.8773);">10.199.2.5</span>
<span class="t" style="left:298.5px;top:399px;transform:scaleX(0.8939);">IPv4</span>
<span class="t" style="left:402.5px;top:399px;transform:scaleX(0.8312);">False</span>
<span class="t" style="left:485.5px;top:399px;transform:scaleX(0.8838);">tok-wlc2504</span>
<span class="t" style="left:685.5px;top:399px;transform:scaleX(0.8344);">Cisco Controller</span>
<span class="t" style="left:885.5px;top:399px;transform:scaleX(0.8524);">Cisco AirCt2504K9</span>
<span class="t" style="left:1222.5px;top:399px;transform:scaleX(0.8838);">tok-wlc2504</span>
<span class="t" style="left:43.5px;top:421px;transform:scaleX(0.8772);">21952</span>
<span class="t" style="left:112.5px;top:421px;transform:scaleX(0.8723);">SNMP</span>
<span class="t" style="left:218.5px;top:421px;transform:scaleX(0.8898);">10.199.2.11</span>
<span class="t" style="left:298.5px;top:421px;transform:scaleX(0.8939);">IPv4</span>
<span class="t" style="left:402.5px;top:421px;transform:scaleX(0.8312);">False</span>
<span class="t" style="left:485.5px;top:421px;transform:scaleX(0.8333);">lab-merakiap-mr18</span>
<span class="t" style="left:685.5px;top:421px;transform:scaleX(0.8711);">Meraki MR18 Cloud Managed AP</span>
<span class="t" style="left:885.5px;top:421px;transform:scaleX(0.8711);">Meraki MR18 Cloud Managed AP</span>
<span class="t" style="left:1222.5px;top:421px;transform:scaleX(0.8333);">lab-merakiap-mr18</span>
<span class="t" style="left:43.5px;top:443px;transform:scaleX(0.8772);">21953</span>
<span class="t" style="left:112.5px;top:443px;transform:scaleX(0.8723);">SNMP</span>
<span class="t" style="left:218.5px;top:443px;transform:scaleX(0.8773);">10.199.2.12</span>
<span class="t" style="left:298.5px;top:443px;transform:scaleX(0.8939);">IPv4</span>
<span class="t" style="left:402.5px;top:443px;transform:scaleX(0.8312);">False</span>
<span class="t" style="left:485.5px;top:443px;transform:scaleX(0.8373);">lab-merakisw-ms220</span>
<span class="t" style="left:685.5px;top:443px;transform:scaleX(0.8656);">Meraki MS220-8P Cloud Managed Po...</span>
<span class="t" style="left:885.5px;top:443px;transform:scaleX(0.8635);">Meraki MS220-8P</span>
<span class="t" style="left:1222.5px;top:443px;transform:scaleX(0.8373);">lab-merakisw-ms220</span>
<span class="t" style="left:43.5px;top:465px;transform:scaleX(0.8772);">21954</span>
<span class="t" style="left:112.5px;top:465px;transform:scaleX(0.8723);">SNMP</span>
<span class="t" style="left:218.5px;top:465px;transform:scaleX(0.8773);">10.199.2.35</span>
<span class="t" style="left:298.5px;top:465px;transform:scaleX(0.8939);">IPv4</span>
<span class="t" style="left:402.5px;top:465px;transform:scaleX(0.8312);">False</span>
<span class="t" style="left:485.5px;top:465px;transform:scaleX(0.8534);">tok-srx100</span>
<span class="t" style="left:685.5px;top:465px;transform:scaleX(0.8534);">tok-srx100</span>
<span class="t" style="left:885.5px;top:465px;transform:scaleX(0.8496);">Juniper SRX100 Firewall</span>
<span class="t" style="left:1222.5px;top:465px;transform:scaleX(0.8534);">tok-srx100</span>
<span class="t" style="left:43.5px;top:487px;transform:scaleX(0.8772);">21955</span>
<span class="t" style="left:112.5px;top:487px;transform:scaleX(0.8723);">SNMP</span>
<span class="t" style="left:218.5px;top:487px;transform:scaleX(0.8773);">10.199.2.48</span>
<span class="t" style="left:298.5px;top:487px;transform:scaleX(0.8939);">IPv4</span>
<span class="t" style="left:402.5px;top:487px;transform:scaleX(0.8312);">False</span>
<span class="t" style="left:485.5px;top:487px;transform:scaleX(0.8632);">tok-bro200e-01</span>
<span class="t" style="left:685.5px;top:487px;transform:scaleX(0.8561);">Fibre Channel Switch.</span>
<span class="t" style="left:885.5px;top:487px;transform:scaleX(0.8707);">Brocade SilkWorm Switch</span>
<span class="t" style="left:1222.5px;top:487px;transform:scaleX(0.8632);">tok-bro200e-01</span>
<span class="t" style="left:43.5px;top:509px;transform:scaleX(0.8772);">21956</span>
<span class="t" style="left:112.5px;top:509px;transform:scaleX(0.8723);">SNMP</span>
<span class="t" style="left:218.5px;top:509px;transform:scaleX(0.8773);">10.199.2.49</span>
<span class="t" style="left:298.5px;top:509px;transform:scaleX(0.8939);">IPv4</span>
<span class="t" style="left:402.5px;top:509px;transform:scaleX(0.8312);">False</span>
<span class="t" style="left:485.5px;top:509px;transform:scaleX(0.8632);">tok-bro200e-02</span>
<span class="t" style="left:685.5px;top:509px;transform:scaleX(0.8561);">Fibre Channel Switch.</span>
<span class="t" style="left:885.5px;top:509px;transform:scaleX(0.8707);">Brocade SilkWorm Switch</span>
<span class="t" style="left:1222.5px;top:509px;transform:scaleX(0.8632);">tok-bro200e-02</span>
<span class="t" style="left:43.5px;top:531px;transform:scaleX(0.8772);">21957</span>
<span class="t" style="left:112.5px;top:531px;transform:scaleX(0.8723);">SNMP</span>
<span class="t" style="left:218.5px;top:531px;transform:scaleX(0.8773);">10.199.2.90</span>
<span class="t" style="left:298.5px;top:531px;transform:scaleX(0.8939);">IPv4</span>
<span class="t" style="left:402.5px;top:531px;transform:scaleX(0.8312);">False</span>
<span class="t" style="left:485.5px;top:531px;transform:scaleX(0.8375);">lab-merakifw-mx64</span>
<span class="t" style="left:685.5px;top:531px;transform:scaleX(0.8668);">Meraki MX64 Cloud Managed Router</span>
<span class="t" style="left:885.5px;top:531px;transform:scaleX(0.8696);">Meraki MX64</span>
<span class="t" style="left:1052.5px;top:531px;transform:scaleX(0.8524);">lab-merakifw-mx64-8815440855d8</span>
<span class="t" style="left:1222.5px;top:531px;transform:scaleX(0.8375);">lab-merakifw-mx64</span>
<svg style="left:6px;top:49px" width="7" height="11" viewBox="0 0 7 11"><path d="M0.6 0.6 L6.2 5.5 L0.6 10.4 Z" fill="#404040"/></svg>
</div>
<div style="left:1862px;top:362px;width:16px;height:556px;background:#f0f0f0;"></div>
<svg style="left:1863px;top:365px" width="12" height="12" viewBox="-6.4 -6.2 12 12"><polygon points="0,-3.1 3.7,0.6 3.7,3.1 0,-0.6 -3.7,3.1 -3.7,0.6" fill="#606060"/></svg>
<div style="left:1862px;top:379px;width:15px;height:308px;background:#cdcdcd;"></div>
<svg style="left:1863px;top:902px" width="12" height="12" viewBox="-6.4 -6.8 12 12"><polygon points="0,3.1 3.7,-0.6 3.7,-3.1 0,0.6 -3.7,-3.1 -3.7,-0.6" fill="#606060"/></svg>
<div style="left:476px;top:918px;width:1403px;height:16px;background:#f0f0f0;"></div>
<svg style="left:477px;top:919px" width="12" height="12" viewBox="-6.2 -6.5 12 12"><polygon points="-3.1,0 0.6,3.7 3.1,3.7 -0.6,0 3.1,-3.7 0.6,-3.7" fill="#606060"/></svg>
<div style="left:492px;top:918px;width:160px;height:15px;background:#cdcdcd;"></div>
<svg style="left:1846px;top:919px" width="12" height="12" viewBox="-6.8 -6.5 12 12"><polygon points="3.1,0 -0.6,3.7 -3.1,3.7 0.6,0 -3.1,-3.7 -0.6,-3.7" fill="#606060"/></svg>
<svg style="left:23px;top:313px" width="196" height="54" viewBox="23 313 196 54"><ellipse cx="122.50" cy="342.60" rx="86.1" ry="15.499999999999998" fill="none" stroke="#000" stroke-opacity="0.035" stroke-width="8.0"/><ellipse cx="122.50" cy="342.60" rx="86.1" ry="15.499999999999998" fill="none" stroke="#000" stroke-opacity="0.045" stroke-width="6.5"/><ellipse cx="122.50" cy="342.60" rx="86.1" ry="15.499999999999998" fill="none" stroke="#000" stroke-opacity="0.06" stroke-width="5.0"/><ellipse cx="122.50" cy="342.60" rx="86.1" ry="15.499999999999998" fill="none" stroke="#000" stroke-opacity="0.07" stroke-width="3.8"/><ellipse cx="122.50" cy="342.60" rx="86.1" ry="15.499999999999998" fill="none" stroke="#000" stroke-opacity="0.08" stroke-width="2.6"/><ellipse cx="122.50" cy="342.60" rx="86.1" ry="15.499999999999998" fill="none" stroke="#000" stroke-opacity="0.08" stroke-width="1.4"/><ellipse cx="120.00" cy="339.60" rx="86.1" ry="15.499999999999998" fill="none" stroke="#ff0000" stroke-width="1.8"/></svg>
<svg style="left:-41px;top:824px" width="196" height="54" viewBox="-41 824 196 54"><ellipse cx="58.70" cy="853.60" rx="86.1" ry="15.499999999999998" fill="none" stroke="#000" stroke-opacity="0.035" stroke-width="8.0"/><ellipse cx="58.70" cy="853.60" rx="86.1" ry="15.499999999999998" fill="none" stroke="#000" stroke-opacity="0.045" stroke-width="6.5"/><ellipse cx="58.70" cy="853.60" rx="86.1" ry="15.499999999999998" fill="none" stroke="#000" stroke-opacity="0.06" stroke-width="5.0"/><ellipse cx="58.70" cy="853.60" rx="86.1" ry="15.499999999999998" fill="none" stroke="#000" stroke-opacity="0.07" stroke-width="3.8"/><ellipse cx="58.70" cy="853.60" rx="86.1" ry="15.499999999999998" fill="none" stroke="#000" stroke-opacity="0.08" stroke-width="2.6"/><ellipse cx="58.70" cy="853.60" rx="86.1" ry="15.499999999999998" fill="none" stroke="#000" stroke-opacity="0.08" stroke-width="1.4"/><ellipse cx="56.20" cy="850.60" rx="86.1" ry="15.499999999999998" fill="none" stroke="#ff0000" stroke-width="1.8"/></svg>
<svg style="left:907px;top:345px" width="194" height="55" viewBox="907 345 194 55"><ellipse cx="1006.40" cy="375.40" rx="85.5" ry="15.6" fill="none" stroke="#000" stroke-opacity="0.035" stroke-width="8.0"/><ellipse cx="1006.40" cy="375.40" rx="85.5" ry="15.6" fill="none" stroke="#000" stroke-opacity="0.045" stroke-width="6.5"/><ellipse cx="1006.40" cy="375.40" rx="85.5" ry="15.6" fill="none" stroke="#000" stroke-opacity="0.06" stroke-width="5.0"/><ellipse cx="1006.40" cy="375.40" rx="85.5" ry="15.6" fill="none" stroke="#000" stroke-opacity="0.07" stroke-width="3.8"/><ellipse cx="1006.40" cy="375.40" rx="85.5" ry="15.6" fill="none" stroke="#000" stroke-opacity="0.08" stroke-width="2.6"/><ellipse cx="1006.40" cy="375.40" rx="85.5" ry="15.6" fill="none" stroke="#000" stroke-opacity="0.08" stroke-width="1.4"/><ellipse cx="1003.90" cy="372.40" rx="85.5" ry="15.6" fill="none" stroke="#ff0000" stroke-width="1.8"/></svg>
<svg style="left:1554px;top:448px" width="13" height="20" viewBox="0 0 13 20"><path d="M0.5 0.7 V16.6 L4.2 13.2 L6.8 19 L9.2 17.9 L6.7 12.3 H11.8 Z" fill="#fff" stroke="#000" stroke-width="1" stroke-linejoin="miter"/></svg>
</div></body></html>
